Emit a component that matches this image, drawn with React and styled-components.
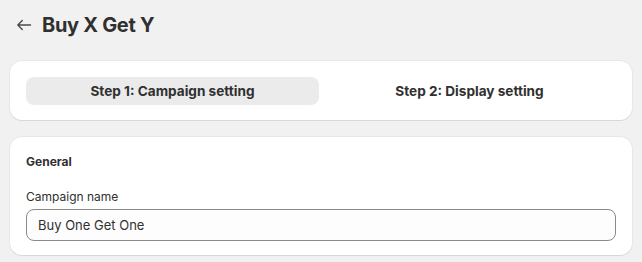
import React from 'react';
import styled, { createGlobalStyle } from 'styled-components';

const GlobalStyle = createGlobalStyle`
  html, body {
    margin: 0;
    padding: 0;
    background: #f1f1f1;
    font-family: Inter, "Noto Sans", sans-serif;
    color: #303030;
  }
  * { box-sizing: border-box; }
`;

const Page = styled.div`
  padding: 11px 10px 10px;
  display: flex;
  flex-direction: column;
`;

const Header = styled.div`
  display: flex;
  align-items: center;
  gap: 8px;
  height: 28px;
  padding-left: 4px;
  margin-bottom: 22px;
`;

const BackButton = styled.button`
  border: none;
  background: none;
  padding: 0;
  width: 20px;
  height: 20px;
  display: flex;
  align-items: center;
  justify-content: center;
  color: #4a4a4a;
  cursor: pointer;
`;

const Title = styled.h1`
  margin: 0;
  font-size: 20px;
  font-weight: 700;
  color: #303030;
  letter-spacing: -0.3px;
`;

const Card = styled.div`
  background: #fff;
  border-radius: 12px;
  padding: ${({ $pad }) => $pad || '16px'};
  box-shadow: 0 1px 0 rgba(26, 26, 26, 0.07), 0 0 0 1px rgba(0, 0, 0, 0.04);

  & + & {
    margin-top: 17px;
  }
`;

const Tabs = styled.div`
  display: grid;
  grid-template-columns: 1fr 1fr;
  gap: 4px;
`;

const Tab = styled.button`
  height: 28px;
  border: none;
  border-radius: 8px;
  background: ${({ $active }) => ($active ? '#ebebeb' : 'transparent')};
  font-family: inherit;
  font-size: 13.6px;
  font-weight: 650;
  color: #303030;
  cursor: pointer;
`;

const SectionTitle = styled.h2`
  margin: 0 0 18px;
  font-size: 12px;
  font-weight: 650;
  line-height: 18px;
  color: #303030;
`;

const Label = styled.label`
  display: block;
  font-size: 12px;
  line-height: 16px;
  color: #303030;
  margin-bottom: 4px;
`;

const Input = styled.input`
  display: block;
  width: 100%;
  height: 32px;
  border: 1px solid #8a8a8a;
  border-radius: 8px;
  background: #fdfdfd;
  padding: 0 11px;
  font-family: inherit;
  font-size: 13px;
  color: #303030;
  outline: none;
`;

export default function App() {
  return (
    <>
      <GlobalStyle />
      <Page>
        <Header>
          <BackButton aria-label="Back">
            <svg width="16" height="16" viewBox="0 0 16 16" fill="none">
              <path d="M14.5 8H1.8M6.3 3.5L1.8 8L6.3 12.5" stroke="currentColor" strokeWidth="1.4" strokeLinecap="round" strokeLinejoin="round" />
            </svg>
          </BackButton>
          <Title>Buy X Get Y</Title>
        </Header>
        <Card $pad="16px 16px 15px">
          <Tabs>
            <Tab $active>Step 1: Campaign setting</Tab>
            <Tab>Step 2: Display setting</Tab>
          </Tabs>
        </Card>
        <Card $pad="16px 16px 14px">
          <SectionTitle>General</SectionTitle>
          <Label>Campaign name</Label>
          <Input defaultValue="Buy One Get One" />
        </Card>
      </Page>
    </>
  );
}
